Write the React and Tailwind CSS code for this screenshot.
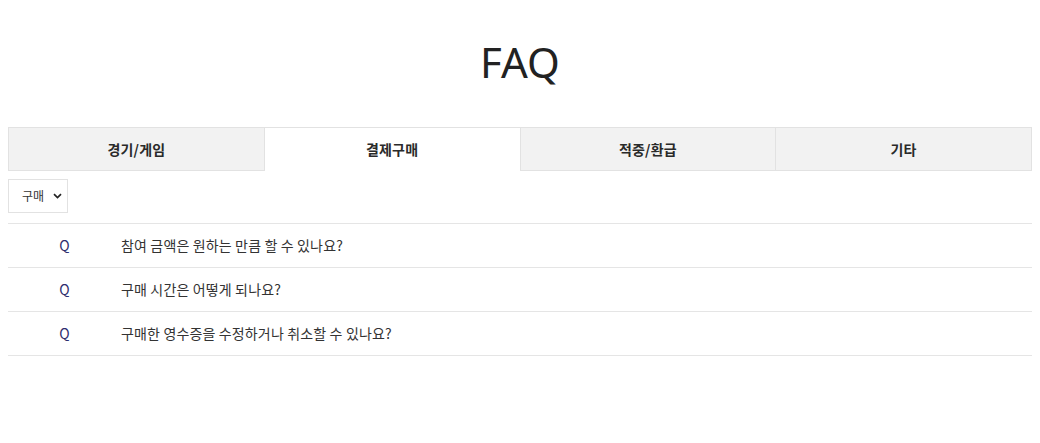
import React from "react";

const font = { fontFamily: '"Noto Sans CJK KR", "Noto Sans", sans-serif' };

const tabs = ["경기/게임", "결제구매", "적중/환급", "기타"];
const questions = [
  "참여 금액은 원하는 만큼 할 수 있나요?",
  "구매 시간은 어떻게 되나요?",
  "구매한 영수증을 수정하거나 취소할 수 있나요?",
];

export default function App() {
  return (
    <div className="w-[1040px] h-[443px] bg-white px-2 text-[#333]" style={font}>
      <div className="h-[127px] flex items-center justify-center pb-[4px]">
        <h1 className="text-[42px] font-normal text-[#222]" style={{ fontFamily: '"Noto Sans", "Noto Sans CJK KR", sans-serif' }}>FAQ</h1>
      </div>
      <div className="grid grid-cols-4 border-l border-[#e2e2e2]">
        {tabs.map((t, i) => {
          const active = i === 1;
          return (
            <div
              key={t}
              className={
                active
                  ? "h-[44px] flex items-center justify-center border-t border-r border-[#e2e2e2] bg-white text-[14px] font-bold text-[#2a2a2a] tracking-[0.2px]"
                  : "h-[44px] flex items-center justify-center border-t border-r border-b border-[#e2e2e2] bg-[#f2f2f2] text-[14px] font-bold text-[#2a2a2a] tracking-[0.2px]"
              }
            >
              {t}
            </div>
          );
        })}
      </div>
      <div className="mt-[8px] relative w-[60px] h-[34px]">
        <select
          className="appearance-none w-full h-full border border-[#e2e2e2] bg-white pl-[13px] text-[12px] text-[#333] outline-none"
          style={font}
          defaultValue="구매"
        >
          <option>구매</option>
        </select>
        <svg className="absolute right-[6px] top-[14px] pointer-events-none" width="9" height="6" viewBox="0 0 9 6">
          <path d="M1 1.2 L4.5 4.5 L8 1.2" fill="none" stroke="#222" strokeWidth="1.7" />
        </svg>
      </div>
      <div className="mt-[10px] border-t border-[#e5e5e5]">
        {questions.map((q) => (
          <div key={q} className="h-[44px] flex items-center border-b border-[#e5e5e5]">
            <div className="w-[113px] text-center text-[14px] text-[#2e2e6e]">Q</div>
            <div className="text-[14px] text-[#333] tracking-[0.15px]">{q}</div>
          </div>
        ))}
      </div>
    </div>
  );
}
